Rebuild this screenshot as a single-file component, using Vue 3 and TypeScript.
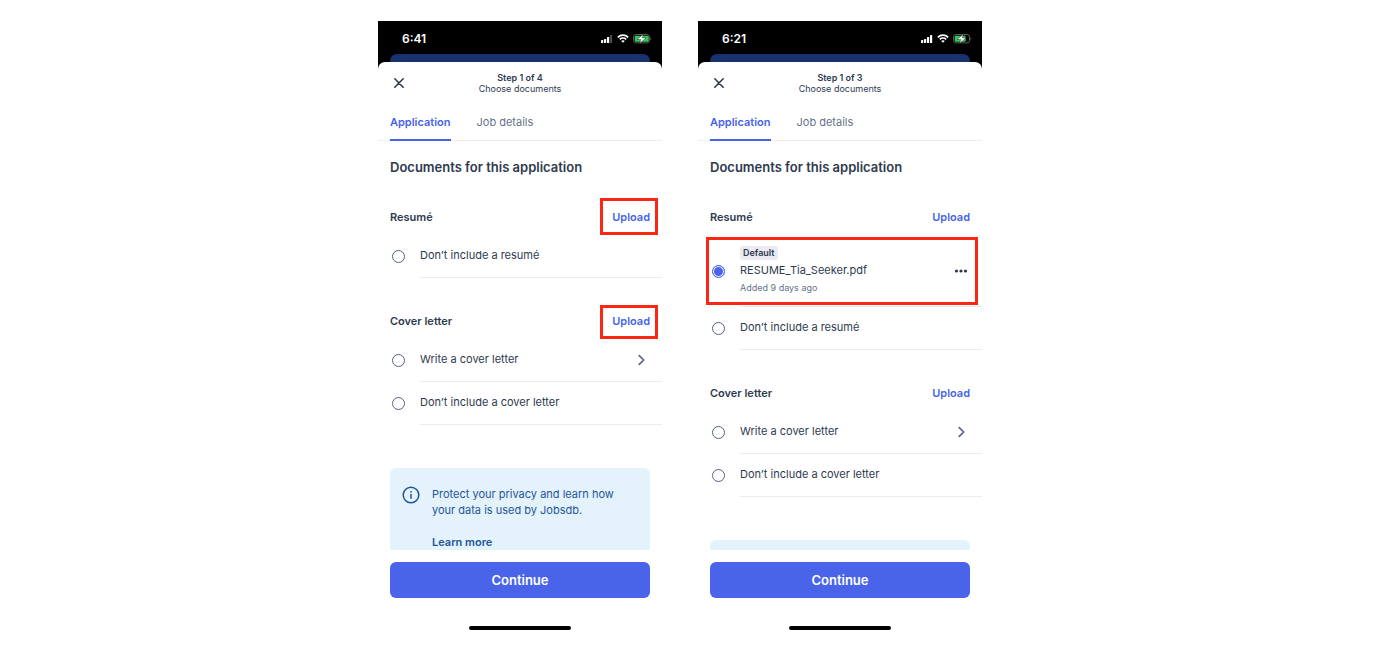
<script setup lang="ts">
import { reactive } from 'vue'

interface Option {
  id: string
  label: string
  badge?: string
  note?: string
  action?: 'more' | 'next'
  marked?: boolean
}

interface Section {
  id: string
  title: string
  mark?: 'wide' | 'snug'
  options: Option[]
}

interface Phone {
  id: string
  time: string
  bars: number
  charge: number
  step: string
  notice?: string
  sections: Section[]
}

const noResume: Option = { id: 'none', label: 'Don’t include a resumé' }
const letterOptions: Option[] = [
  { id: 'write', label: 'Write a cover letter', action: 'next' },
  { id: 'none', label: 'Don’t include a cover letter' },
]

const phones: Phone[] = [
  {
    id: 'first',
    time: '6:41',
    bars: 3,
    charge: 14,
    step: 'Step 1 of 4',
    notice: 'Protect your privacy and learn how your data is used by Jobsdb.',
    sections: [
      { id: 'resume', title: 'Resumé', mark: 'wide', options: [noResume] },
      { id: 'letter', title: 'Cover letter', mark: 'snug', options: letterOptions },
    ],
  },
  {
    id: 'second',
    time: '6:21',
    bars: 4,
    charge: 11,
    step: 'Step 1 of 3',
    sections: [
      {
        id: 'resume',
        title: 'Resumé',
        options: [
          {
            id: 'tia',
            label: 'RESUME_Tia_Seeker.pdf',
            badge: 'Default',
            note: 'Added 9 days ago',
            action: 'more',
            marked: true,
          },
          noResume,
        ],
      },
      { id: 'letter', title: 'Cover letter', options: letterOptions },
    ],
  },
]

const signal = [
  { x: 0, h: 3 },
  { x: 3, h: 4 },
  { x: 6, h: 6 },
  { x: 9, h: 8 },
]

const chosen = reactive<Record<string, string>>({ 'second-resume': 'tia' })
</script>

<template>
  <main class="stage">
    <article v-for="phone in phones" :key="phone.id" class="phone">
      <div class="status">
        <span class="time">{{ phone.time }}</span>
        <span class="indicators">
          <svg width="12" height="8" viewBox="0 0 12 8" aria-hidden="true">
            <rect
              v-for="(bar, i) in signal"
              :key="bar.x"
              :x="bar.x"
              :y="8 - bar.h"
              width="2.2"
              :height="bar.h"
              rx="0.6"
              :fill="i < phone.bars ? '#fff' : '#4a4a4a'"
            />
          </svg>
          <svg width="12" height="9" viewBox="0 0 12 9" fill="none" stroke="#fff" aria-hidden="true">
            <path d="M0.8 3.3C3.7 0.4 8.3 0.4 11.2 3.3" stroke-width="1.7" />
            <path d="M2.8 5.4C4.6 3.7 7.4 3.7 9.2 5.4" stroke-width="1.6" />
            <path d="M6 8.8L4.2 7C5.2 6.1 6.8 6.1 7.8 7Z" fill="#fff" stroke="none" />
          </svg>
          <svg width="19" height="10" viewBox="0 0 19 10" aria-hidden="true">
            <rect x="0.5" y="0.5" width="16" height="8.4" rx="2.5" fill="none" stroke="#5c5c5c" />
            <rect x="1.7" y="1.7" :width="phone.charge" height="6" rx="1.2" fill="#34c759" />
            <path d="M17.5 3.2C18.6 3.8 18.6 5.6 17.5 6.2Z" fill="#6c6c6c" />
            <path
              d="M10.4 0.2L4 5.5H7.9L6.5 9.4L13 3.9H9.2Z"
              fill="#fff"
              stroke="#111"
              stroke-width="0.4"
            />
          </svg>
        </span>
      </div>
      <div class="backdrop"><div class="behind"></div></div>

      <div class="sheet">
        <header class="top">
          <button type="button" class="close" aria-label="Close">
            <svg width="10" height="10" viewBox="0 0 10 10" aria-hidden="true">
              <path d="M0.8 0.8L9.2 9.2M9.2 0.8L0.8 9.2" stroke="#2b3547" stroke-width="1.5" stroke-linecap="round" />
            </svg>
          </button>
          <div class="steps">
            <strong>{{ phone.step }}</strong>
            <span>Choose documents</span>
          </div>
        </header>

        <div class="tabs" role="tablist">
          <button type="button" role="tab" aria-selected="true" class="tab active">Application</button>
          <button type="button" role="tab" aria-selected="false" class="tab">Job details</button>
        </div>

        <div class="body">
          <h2>Documents for this application</h2>

          <section v-for="section in phone.sections" :key="section.id" class="group">
            <div class="group-head">
              <h3>{{ section.title }}</h3>
              <button
                type="button"
                class="upload"
                :class="{ marked: section.mark, snug: section.mark === 'snug' }"
              >
                Upload
              </button>
            </div>
            <div
              v-for="option in section.options"
              :key="option.id"
              class="row"
              :class="{ tall: option.note, marked: option.marked }"
            >
              <input
                :id="`${phone.id}-${section.id}-${option.id}`"
                v-model="chosen[`${phone.id}-${section.id}`]"
                type="radio"
                :name="`${phone.id}-${section.id}`"
                :value="option.id"
              />
              <div class="row-main">
                <label :for="`${phone.id}-${section.id}-${option.id}`" class="texts">
                  <span v-if="option.badge" class="badge">{{ option.badge }}</span>
                  <span class="name">{{ option.label }}</span>
                  <span v-if="option.note" class="note">{{ option.note }}</span>
                </label>
                <button v-if="option.action === 'more'" type="button" class="act" aria-label="More options">
                  <svg width="18" height="18" viewBox="0 0 18 18" fill="#2b3547" aria-hidden="true">
                    <circle cx="4.5" cy="9" r="1.6" />
                    <circle cx="9" cy="9" r="1.6" />
                    <circle cx="13.5" cy="9" r="1.6" />
                  </svg>
                </button>
                <button v-if="option.action === 'next'" type="button" class="act" aria-label="Open">
                  <svg width="18" height="18" viewBox="0 0 18 18" fill="none" aria-hidden="true">
                    <path
                      d="M7.2 4.6L11.7 9L7.2 13.4"
                      stroke="#55627c"
                      stroke-width="1.6"
                      stroke-linecap="round"
                      stroke-linejoin="round"
                    />
                  </svg>
                </button>
              </div>
            </div>
          </section>

          <aside class="notice">
            <template v-if="phone.notice">
              <svg width="18" height="18" viewBox="0 0 18 18" fill="none" aria-hidden="true">
                <circle cx="9" cy="9" r="7.8" stroke="#1e559c" stroke-width="1.5" />
                <path d="M9 8.4V12.2" stroke="#1e559c" stroke-width="1.5" stroke-linecap="round" />
                <circle cx="9" cy="5.8" r="0.9" fill="#1e559c" />
              </svg>
              <div class="notice-text">
                <p>{{ phone.notice }}</p>
                <a href="#">Learn more</a>
              </div>
            </template>
          </aside>
        </div>

        <footer class="foot">
          <button type="button" class="continue">Continue</button>
          <div class="home"></div>
        </footer>
      </div>
    </article>
  </main>
</template>

<style>
body {
  margin: 0;
  background: #fff;
}
</style>

<style scoped>
* {
  box-sizing: border-box;
}

button {
  margin: 0;
  padding: 0;
  border: 0;
  background: none;
  font: inherit;
  cursor: pointer;
}

svg {
  display: block;
  flex: none;
}

.stage {
  display: flex;
  justify-content: center;
  gap: 36px;
  height: 100vh;
  min-height: 560px;
  padding: 21px 35px 21px 0;
  font-family: Inter, "Liberation Sans", sans-serif;
  font-size: 11px;
  color: #2e3a4f;
}

.phone {
  display: flex;
  flex-direction: column;
  flex: 0 1 284px;
  min-width: 0;
}

.status {
  display: flex;
  flex: none;
  align-items: center;
  justify-content: space-between;
  height: 33px;
  padding: 2px 10px 0 24px;
  background: #000;
  color: #fff;
}

.time {
  font-size: 12px;
  font-weight: 600;
}

.indicators {
  display: flex;
  align-items: center;
  gap: 4px;
}

.backdrop {
  flex: none;
  height: 15px;
  padding: 0 12px;
  background: #000;
}

.behind {
  height: 15px;
  border-radius: 7px 7px 0 0;
  background: #1a3170;
}

.sheet {
  display: flex;
  flex: 1;
  flex-direction: column;
  min-height: 0;
  margin-top: -7px;
  border-radius: 7px 7px 0 0;
  background: #fff;
}

.top {
  display: grid;
  flex: none;
  grid-template-columns: 18px 1fr 18px;
  align-items: center;
  height: 42px;
  padding: 0 12px;
}

.close {
  display: grid;
  place-items: center;
  height: 18px;
}

.steps {
  display: flex;
  flex-direction: column;
  font-size: 9px;
  line-height: 11px;
  text-align: center;
}

.steps strong {
  font-weight: 600;
}

.tabs {
  display: flex;
  flex: none;
  gap: 26px;
  height: 37px;
  padding: 0 12px;
  border-bottom: 1px solid #ebecef;
}

.tab {
  height: 37px;
  padding-top: 1px;
  border-bottom: 2px solid transparent;
  color: #66728c;
}

.tab.active {
  border-bottom-color: #4964e9;
  color: #4964e9;
  font-weight: 600;
}

.body {
  flex: 1;
  min-height: 0;
  overflow-y: auto;
  scrollbar-width: none;
  padding-left: 12px;
}

h2,
h3,
p {
  margin: 0;
}

h2 {
  padding: 17px 0 24px;
  font-size: 13px;
  font-weight: 600;
  line-height: 18px;
}

.group {
  margin-bottom: 26px;
}

.group-head {
  display: flex;
  align-items: center;
  justify-content: space-between;
  height: 35px;
  padding: 0 12px 2px 0;
}

h3 {
  font-size: 11px;
  font-weight: 600;
}

.upload {
  position: relative;
  color: #4964e9;
  font-weight: 600;
}

.marked {
  position: relative;
}

.marked::after {
  position: absolute;
  border: 3px solid #fb2714;
  content: "";
  pointer-events: none;
}

.upload.marked::after {
  inset: -12px -8px -11px -12px;
}

.upload.snug::after {
  top: -9px;
}

.row.marked::after {
  inset: 2px 4px 2px -4px;
}

.row {
  display: flex;
  align-items: center;
  height: 43px;
}

.row.tall {
  height: 72px;
}

input {
  flex: none;
  width: 13px;
  height: 13px;
  margin: 0 15px 0 2px;
  border: 1px solid #55647f;
  border-radius: 50%;
  background: #fff;
  appearance: none;
}

input:checked {
  border-color: #4964e9;
  background: #4964e9;
  box-shadow: inset 0 0 0 1px #fff;
}

.row-main {
  display: flex;
  flex: 1;
  align-items: center;
  justify-content: space-between;
  height: 100%;
  padding-right: 12px;
  border-bottom: 1px solid #ebecef;
}

.texts {
  display: flex;
  flex-direction: column;
  align-items: flex-start;
}

.name {
  padding-bottom: 2px;
  line-height: 16px;
}

.tall .name {
  padding: 2px 0 3px;
}

.badge {
  padding: 0 3px;
  border-radius: 3px;
  background: #e9eaf2;
  font-size: 9px;
  font-weight: 600;
  line-height: 14px;
}

.note {
  color: #66728c;
  font-size: 9px;
  line-height: 14px;
}

.notice {
  display: flex;
  gap: 12px;
  min-height: 100px;
  margin: 43px 12px 0 0;
  padding: 18px 12px;
  border-radius: 6px;
  background: #e3f2fb;
  color: #1e559c;
  line-height: 16px;
}

.notice-text {
  display: flex;
  flex-direction: column;
  gap: 16px;
}

.notice a {
  color: inherit;
  font-weight: 600;
  text-decoration: none;
}

.foot {
  display: flex;
  flex: none;
  flex-direction: column;
  align-items: center;
  gap: 28px;
  padding: 12px 12px 10px;
}

.continue {
  width: 100%;
  height: 36px;
  border-radius: 6px;
  background: #4964e9;
  color: #fff;
  font-size: 13px;
  font-weight: 600;
}

.home {
  width: 102px;
  height: 4px;
  border-radius: 2px;
  background: #000;
}
</style>
